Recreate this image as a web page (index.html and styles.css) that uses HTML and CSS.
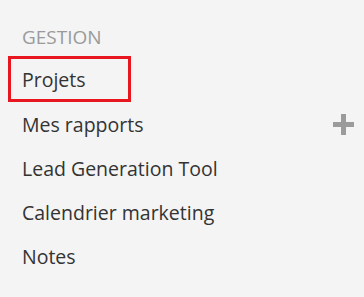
FILE: index.html
```html
<!DOCTYPE html>
<html lang="fr">
<head>
<meta charset="UTF-8">
<meta name="viewport" content="width=device-width, initial-scale=1.0">
<title>Gestion</title>
<link rel="stylesheet" href="styles.css">
</head>
<body>
<div class="sidebar">
  <div class="section-title">GESTION</div>
  <ul class="menu">
    <li class="menu-item highlight">Projets</li>
    <li class="menu-item">
      <span>Mes rapports</span>
      <svg class="add-icon" width="21" height="21" viewBox="0 0 21 21">
        <rect x="8" y="0" width="5" height="21" fill="#9b9b9b"/>
        <rect x="0" y="8" width="21" height="5" fill="#9b9b9b"/>
      </svg>
    </li>
    <li class="menu-item">Lead Generation Tool</li>
    <li class="menu-item">Calendrier marketing</li>
    <li class="menu-item">Notes</li>
  </ul>
</div>
</body>
</html>
```
FILE: styles.css
```css
body {
    margin: 0;
    padding: 0;
    font-family: "Open Sans", "Noto Sans", sans-serif;
    background-color: #f4f4f4;
    color: #333333;
  }

  .sidebar {
    padding-top: 25px;
    padding-left: 22px;
    padding-right: 10px;
  }

  .section-title {
    font-size: 19px;
    line-height: 24px;
    color: #9a9a9a;
    height: 31px;
  }

  .menu {
    list-style: none;
    margin: 0;
    padding: 0;
  }

  .menu-item {
    font-size: 19.5px;
    height: 44px;
    display: flex;
    align-items: center;
    justify-content: space-between;
  }

  .menu-item.highlight {
    box-sizing: border-box;
    width: 123px;
    height: 46px;
    margin-left: -14px;
    padding-left: 11px;
    border: 3px solid #e8161f;
  }

  .add-icon {
    display: block;
  }
```
